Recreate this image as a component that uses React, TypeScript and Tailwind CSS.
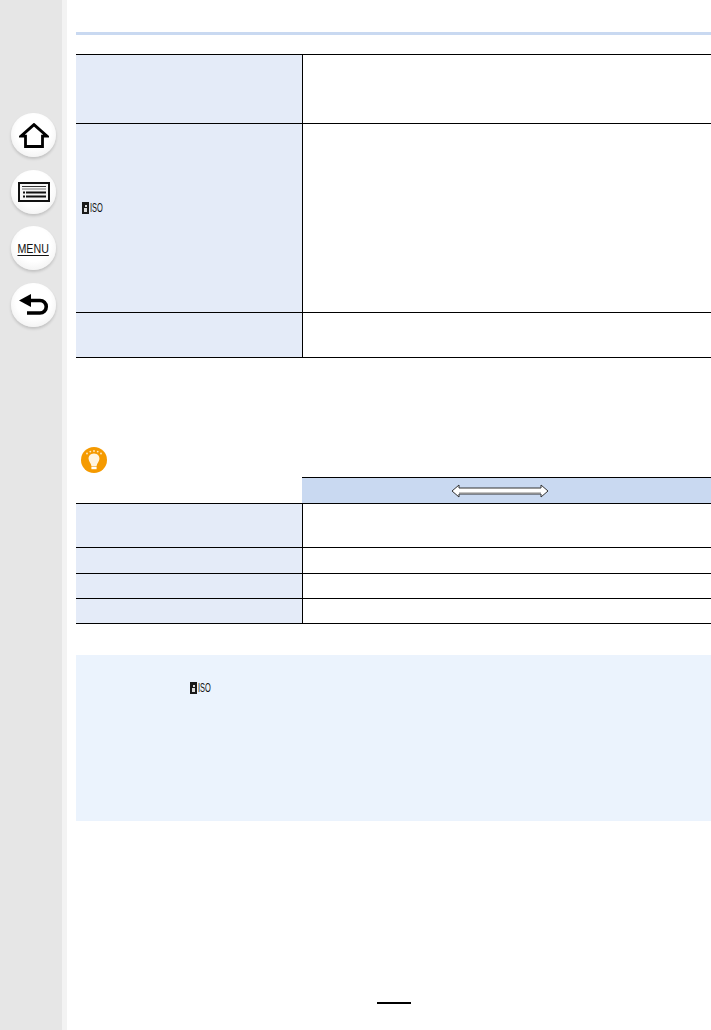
import type { ReactNode } from 'react';

function SideButton({ children }: { children: ReactNode }) {
  return (
    <div className="w-[45px] h-[44px] rounded-full flex items-center justify-center bg-[radial-gradient(circle_at_50%_42%,#ffffff_50%,#f4f4f4_76%,#ececec_100%)] shadow-[0_2px_3px_rgba(0,0,0,0.16)]">
      {children}
    </div>
  );
}

function IsoIcon() {
  return (
    <div className="flex items-center w-[21px] h-[12px]">
      <div className="w-[7px] h-[12px] bg-[#1a1a1a] flex flex-col items-center justify-center gap-[1px] shrink-0">
        <div className="w-[2px] h-[2px] bg-[#ddd]" />
        <div className="w-[3px] h-[4px] bg-[#ddd]" />
      </div>
      <span className="ml-[1px] text-[12px] leading-none text-[#111] origin-left scale-x-[0.62] font-['Liberation_Sans',sans-serif]">ISO</span>
    </div>
  );
}

function Row({ height, children }: { height: string; children?: ReactNode }) {
  return (
    <div className={`flex border-b border-black ${height}`}>
      <div className="w-[226px] bg-[#e4ebf8] shrink-0">{children}</div>
      <div className="flex-1 border-l border-black" />
    </div>
  );
}

export default function App() {
  return (
    <div className="flex w-[711px] h-[1030px] bg-white overflow-hidden font-['Liberation_Sans',sans-serif]">
      <aside className="w-[67px] shrink-0 bg-[#e6e6e6] border-r-[5px] border-[#f3f3f3] flex flex-col gap-[12.6px] pt-[113px] pl-[11px]">
        <SideButton>
          <svg width="30" height="25" viewBox="0 0 30 25">
            <path d="M15 1.6 L2 13.2 H6.5 V23.5 H23.5 V13.2 H28 Z" fill="none" stroke="#000" strokeWidth="2.8" strokeLinejoin="miter" />
          </svg>
        </SideButton>
        <SideButton>
          <svg width="32" height="20" viewBox="0 0 32 20">
            <rect x="1" y="1" width="30" height="18" fill="#f7f7f7" stroke="#111" strokeWidth="2" />
            <rect x="4" y="4" width="24" height="1" fill="#333" />
            <rect x="4" y="6.5" width="24" height="1" fill="#777" />
            <rect x="8" y="9.5" width="20" height="2" fill="#111" />
            <rect x="8" y="13.5" width="20" height="2" fill="#111" />
            <rect x="5" y="9.5" width="2" height="2" fill="#111" />
            <rect x="5" y="13.5" width="2" height="2" fill="#111" />
          </svg>
        </SideButton>
        <SideButton>
          <span className="text-[13px] leading-none text-[#111] underline underline-offset-[2px] origin-center scale-x-[0.82]">MENU</span>
        </SideButton>
        <SideButton>
          <svg width="30" height="22" viewBox="0 0 30 22">
            <path d="M0 6.5 L12 0 V13 Z" fill="#000" />
            <path d="M10 6.5 H21 A6.2 6.2 0 0 1 21 19 H8" fill="none" stroke="#000" strokeWidth="3.6" />
          </svg>
        </SideButton>
      </aside>

      <main className="flex-1 pl-[9px] pt-[32px] flex flex-col">
        <div className="h-[3px] bg-[#c9d9f1]" />

        <div className="mt-[19px] border-t border-black">
          <Row height="h-[69px]" />
          <Row height="h-[189px]">
            <div className="pl-[6px] pt-[78px]">
              <IsoIcon />
            </div>
          </Row>
          <Row height="h-[45px]" />
        </div>

        <div className="mt-[89px] ml-[5px]">
          <svg width="26" height="26" viewBox="0 0 26 26" className="block">
            <circle cx="13" cy="13" r="13" fill="#f59a00" />
            <g fill="#ffe9c4">
              <circle cx="6" cy="6.5" r="0.9" />
              <circle cx="9.3" cy="4.6" r="0.9" />
              <circle cx="13" cy="4" r="0.9" />
              <circle cx="16.7" cy="4.6" r="0.9" />
              <circle cx="20" cy="6.5" r="0.9" />
            </g>
            <path d="M13 6.5 C9.2 6.5 7.4 9.4 7.6 12 C7.8 14.8 10 16 10.4 19 H15.6 C16 16 18.2 14.8 18.4 12 C18.6 9.4 16.8 6.5 13 6.5 Z" fill="#fff4df" />
            <rect x="10.4" y="19.6" width="5.2" height="2.6" fill="#fff" />
          </svg>
        </div>

        <div className="mt-[4px]">
          <div className="flex border-b border-black h-[27px]">
            <div className="w-[226px] shrink-0" />
            <div className="flex-1 bg-[#c9d9f1] border-t border-black flex items-center justify-center pr-[14px]">
              <svg width="98" height="14" viewBox="0 0 98 14">
                <path d="M1 7 L8 1 V4 H90 V1 L97 7 L90 13 V10 H8 V13 Z" fill="#fff" stroke="#333" strokeWidth="1" />
                <rect x="8" y="8.5" width="82" height="1" fill="#888" />
              </svg>
            </div>
          </div>
          <Row height="h-[44px]" />
          <Row height="h-[26px]" />
          <Row height="h-[25px]" />
          <Row height="h-[25px]" />
        </div>

        <div className="mt-[31px] h-[166px] bg-[#ebf3fd] pl-[114px] pt-[27px]">
          <IsoIcon />
        </div>

        <div className="mt-[181px] mx-auto w-[34px] h-[2px] bg-black" />
      </main>
    </div>
  );
}
